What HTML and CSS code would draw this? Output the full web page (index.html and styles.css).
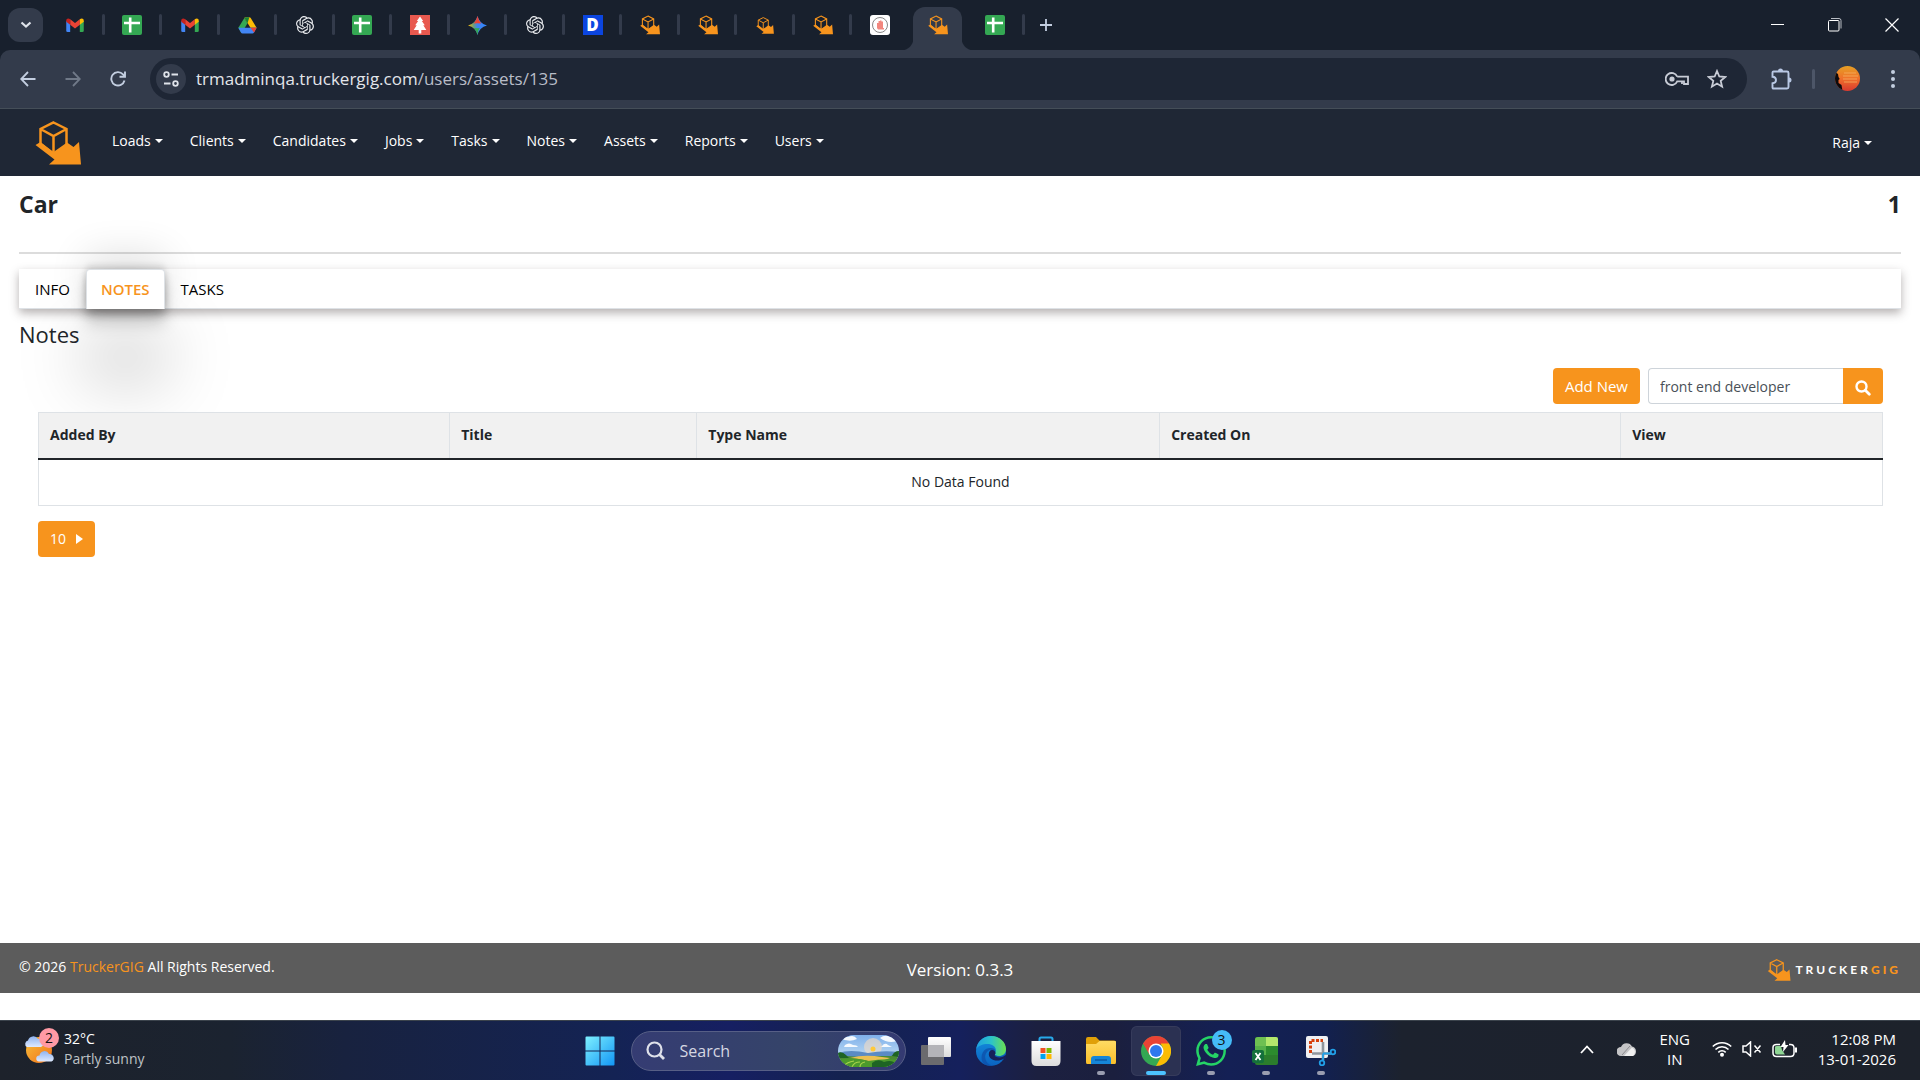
FILE: index.html
```html
<!DOCTYPE html>
<html lang="en">
<head>
<meta charset="utf-8">
<title>TruckerGIG - Car notes</title>
<link rel="stylesheet" href="styles.css">
</head>
<body>
<svg class="defs" width="0" height="0" aria-hidden="true">
  <defs>
    <linearGradient id="g-win" x1="0" y1="0" x2="1" y2="1"><stop offset="0" stop-color="#7ef0ff"/><stop offset="1" stop-color="#1296f5"/></linearGradient>
    <linearGradient id="g-gem" x1="0" y1="0" x2="1" y2="0"><stop offset="0" stop-color="#fbbc04"/><stop offset=".3" stop-color="#6a9d7c"/><stop offset=".5" stop-color="#3f83f0"/><stop offset="1" stop-color="#3186ff"/></linearGradient>
    <linearGradient id="g-edge" x1="0" y1="0" x2="1" y2="0"><stop offset="0" stop-color="#1f9fe0"/><stop offset=".5" stop-color="#2cc3c9"/><stop offset="1" stop-color="#6be04f"/></linearGradient>
    <linearGradient id="g-edge2" x1="0" y1="0" x2="0" y2="1"><stop offset="0" stop-color="#1490df"/><stop offset="1" stop-color="#0a62c0"/></linearGradient>
    <linearGradient id="g-folder" x1="0" y1="0" x2="0" y2="1"><stop offset="0" stop-color="#ffdb63"/><stop offset="1" stop-color="#fbbf2a"/></linearGradient>
    <linearGradient id="g-sun" x1="0" y1="0" x2="1" y2="1"><stop offset="0" stop-color="#f8c13a"/><stop offset="1" stop-color="#f0701a"/></linearGradient>
    <linearGradient id="g-cloud" x1="0" y1="0" x2="0" y2="1"><stop offset="0" stop-color="#8fb4f0"/><stop offset="1" stop-color="#dfeaff"/></linearGradient>
    <linearGradient id="g-sky" x1="0" y1="0" x2="0" y2="1"><stop offset="0" stop-color="#7fb0ea"/><stop offset="1" stop-color="#d5ecf8"/></linearGradient>
    <linearGradient id="g-avatar" x1="0" y1="0" x2="0" y2="1"><stop offset="0" stop-color="#e6a024"/><stop offset=".5" stop-color="#f0702a"/><stop offset="1" stop-color="#d83a30"/></linearGradient>
    <linearGradient id="g-paper" x1="0" y1="0" x2="0" y2="1"><stop offset="0" stop-color="#fff"/><stop offset="1" stop-color="#dcdcdc"/></linearGradient>
    <clipPath id="c-scene"><rect width="61" height="32" rx="16"/></clipPath>
    <clipPath id="c-avatar"><circle cx="12.500" cy="12.500" r="12.500"/></clipPath>
  </defs>
  <symbol id="i-truck" viewBox="0 0 46 44">
    <path d="M18.500 1.500 31.500 8v18L18.500 33 5.500 23V8ZM5.500 8l13 7 13-7M18.500 15v17" fill="none" stroke="#f7941d" stroke-width="2.500"/>
    <path d="M.5 24 5.500 21l13 10L32 21.500l6.500 4.500L44 21l2 22.500H14l5.500-5Z" fill="#f7941d"/>
  </symbol>
  <symbol id="i-gmail" viewBox="0 0 20 16">
    <path d="M0 3v11.500Q0 16 1.500 16H4.500V6Z" fill="#4285f4"/><path d="M20 3v11.500Q20 16 18.500 16H15.500V6Z" fill="#34a853"/>
    <path d="M4.500 1.500 10 5.800l5.500-4.300v6.200L10 12 4.500 7.700Z" fill="#ea4335"/>
    <path d="M15.500 7.700V1.500C17.500-.2 20 .5 20 3v1.400Z" fill="#fbbc04"/><path d="M4.500 7.700V1.500C2.500-.2 0 .5 0 3v1.400Z" fill="#c5221f"/>
  </symbol>
  <symbol id="i-sheet" viewBox="0 0 20 20"><rect width="20" height="20" rx="2" fill="#34a853"/><path d="M8.200 2.500v15M2 8h16" stroke="#fff" stroke-width="2.600"/></symbol>
  <symbol id="i-drive" viewBox="0 0 20 18">
    <path d="M6.700 1 10 6.500 3.700 17.200.3 11.500Z" fill="#34a853"/><path d="M6.700 1Q7 .3 8 .3h4Q13 .3 13.400 1l6.300 10.500h-6.500Z" fill="#fbbc04"/>
    <path d="M6.700 1Q7 .3 8 .3h4L10 6.500Z" fill="#188038"/><path d="M.3 11.500h19.400l-2.800 5q-.6 1-1.600 1H4.700q-1 0-1.600-1Z" fill="#4285f4"/><path d="M13.200 11.500h6.500l-2.800 5Z" fill="#ea4335"/>
  </symbol>
  <symbol id="i-gpt" viewBox="0 0 24 24"><path fill="#e8eaed" d="M22.2819 9.8211a5.9847 5.9847 0 0 0-.5157-4.9108 6.0462 6.0462 0 0 0-6.5098-2.9A6.0651 6.0651 0 0 0 4.9807 4.1818a5.9847 5.9847 0 0 0-3.9977 2.9 6.0462 6.0462 0 0 0 .7427 7.0966 5.98 5.98 0 0 0 .511 4.9107 6.051 6.051 0 0 0 6.5146 2.9001A5.9847 5.9847 0 0 0 13.2599 24a6.0557 6.0557 0 0 0 5.7718-4.2058 5.9894 5.9894 0 0 0 3.9977-2.9001 6.0557 6.0557 0 0 0-.7475-7.0729zm-9.022 12.6081a4.4755 4.4755 0 0 1-2.8764-1.0408l.1419-.0804 4.7783-2.7582a.7948.7948 0 0 0 .3927-.6813v-6.7369l2.02 1.1686a.071.071 0 0 1 .038.052v5.5826a4.504 4.504 0 0 1-4.4945 4.4944zm-9.6607-4.1254a4.4708 4.4708 0 0 1-.5346-3.0137l.142.0852 4.783 2.7582a.7712.7712 0 0 0 .7806 0l5.8428-3.3685v2.3324a.0804.0804 0 0 1-.0332.0615L9.74 19.9502a4.4992 4.4992 0 0 1-6.1408-1.6464zM2.3408 7.8956a4.485 4.485 0 0 1 2.3655-1.9728V11.6a.7664.7664 0 0 0 .3879.6765l5.8144 3.3543-2.0201 1.1685a.0757.0757 0 0 1-.071 0l-4.8303-2.7865A4.504 4.504 0 0 1 2.3408 7.872zm16.5963 3.8558L13.1038 8.364 15.1192 7.2a.0757.0757 0 0 1 .071 0l4.8303 2.7913a4.4944 4.4944 0 0 1-.6765 8.1042v-5.6772a.79.79 0 0 0-.407-.667zm2.0107-3.0231l-.142-.0852-4.7735-2.7818a.7759.7759 0 0 0-.7854 0L9.409 9.2297V6.8974a.0662.0662 0 0 1 .0284-.0615l4.8303-2.7866a4.4992 4.4992 0 0 1 6.6802 4.66zM8.3065 12.863l-2.02-1.1638a.0804.0804 0 0 1-.038-.0567V6.0742a4.4992 4.4992 0 0 1 7.3757-3.4537l-.142.0805L8.704 5.459a.7948.7948 0 0 0-.3927.6813zm1.0976-2.3654l2.602-1.4998 2.6069 1.4998v2.9994l-2.5974 1.4997-2.6067-1.4997Z"/></symbol>
  <symbol id="i-tree" viewBox="0 0 20 20"><path d="M0 0h20v20H0Z" fill="#e8594f"/><path d="m10 1.500 3.200 4.500h-1.400l3 4.200h-1.500l3 4.800h-5v3.500H8.700V15h-5l3-4.800H5.200l3-4.200H6.800Z" fill="#fff"/></symbol>
  <symbol id="i-gem" viewBox="0 0 20 20"><path d="M10 0Q12 8 20 10 12 12 10 20 8 12 0 10 8 8 10 0Z" fill="url(#g-gem)"/><path d="M10 0Q11 5 14 7.800L10 7.500 6 7.800Q9 5 10 0Z" fill="#ea4335"/><path d="M10 20q-1-5-4-7.500l4 .5 2.500-.5Q10.800 14 10 20Z" fill="#34a853"/></symbol>
  <symbol id="i-hand" viewBox="0 0 20 20"><rect width="20" height="20" rx="3" fill="#fff"/><circle cx="10" cy="10" r="7.500" fill="none" stroke="#888"/><path d="M7 8h1.500V6h1.500v-.5h1.500V6.500H13V13h1v1.500H8L7 13Z" fill="#f2877e"/></symbol>
</svg>

<header class="browser">
  <div class="tabstrip">
    <button class="tab-search" aria-label="Search tabs"><svg width="12" height="8" viewBox="0 0 12 8"><path d="m1.500 1.500 4.500 4 4.500-4" fill="none" stroke="#dfe3ea" stroke-width="2.200"/></svg></button>
    <div class="tabs" role="tablist" aria-label="Open tabs">
      <button class="tab" role="tab" aria-label="Gmail"><svg width="18" height="14"><use href="#i-gmail"/></svg></button>
      <button class="tab" role="tab" aria-label="Sheets"><svg width="20" height="20"><use href="#i-sheet"/></svg></button>
      <button class="tab" role="tab" aria-label="Gmail"><svg width="18" height="14"><use href="#i-gmail"/></svg></button>
      <button class="tab" role="tab" aria-label="Drive"><svg width="19" height="17"><use href="#i-drive"/></svg></button>
      <button class="tab" role="tab" aria-label="ChatGPT"><svg width="18" height="18"><use href="#i-gpt"/></svg></button>
      <button class="tab" role="tab" aria-label="Sheets"><svg width="20" height="20"><use href="#i-sheet"/></svg></button>
      <button class="tab" role="tab" aria-label="Tree"><svg width="20" height="20"><use href="#i-tree"/></svg></button>
      <button class="tab" role="tab" aria-label="Gemini"><svg width="19" height="19"><use href="#i-gem"/></svg></button>
      <button class="tab" role="tab" aria-label="ChatGPT"><svg width="18" height="18"><use href="#i-gpt"/></svg></button>
      <button class="tab" role="tab"><span class="fav-d">D</span></button>
      <button class="tab" role="tab" aria-label="TruckerGIG"><svg width="20" height="20"><use href="#i-truck"/></svg></button>
      <button class="tab" role="tab" aria-label="TruckerGIG"><svg width="20" height="20"><use href="#i-truck"/></svg></button>
      <button class="tab" role="tab" aria-label="TruckerGIG"><svg width="18" height="17"><use href="#i-truck"/></svg></button>
      <button class="tab" role="tab" aria-label="TruckerGIG"><svg width="20" height="20"><use href="#i-truck"/></svg></button>
      <button class="tab plain" role="tab" aria-label="Site"><svg width="20" height="20"><use href="#i-hand"/></svg></button>
      <button class="tab plain current" role="tab" aria-selected="true" aria-label="TruckerGIG"><svg width="20" height="20"><use href="#i-truck"/></svg></button>
      <button class="tab" role="tab" aria-label="Sheets"><svg width="20" height="20"><use href="#i-sheet"/></svg></button>
    </div>
    <button class="new-tab" aria-label="New tab"><svg width="14" height="14" viewBox="0 0 14 14"><path d="M7 1v12M1 7h12" stroke="#c3cee0" stroke-width="1.800"/></svg></button>
    <div class="window-buttons">
      <button aria-label="Minimize"><svg width="14" height="14" viewBox="0 0 14 14"><path d="M0 6.500h13" stroke="#fff"/></svg></button>
      <button aria-label="Restore"><svg width="14" height="14" viewBox="0 0 14 14"><path d="M3 .5h8q2 0 2 2v8" fill="none" stroke="#b9bdc4"/><rect x=".5" y="2.500" width="10.500" height="10.500" rx="1" fill="none" stroke="#fff"/></svg></button>
      <button aria-label="Close"><svg width="14" height="14" viewBox="0 0 14 14"><path d="m.5.5 13 13M13.500.5l-13 13" stroke="#fff" stroke-width="1.200"/></svg></button>
    </div>
  </div>
  <div class="toolbar">
    <div class="history">
      <button aria-label="Back"><svg width="16" height="16" viewBox="0 0 16 16"><path d="M15.500 8H1.500M8 1 1.200 8 8 15" fill="none" stroke="#c3cee0" stroke-width="1.800"/></svg></button>
      <button aria-label="Forward"><svg width="16" height="16" viewBox="0 0 16 16"><path d="M.5 8h14M8 1l6.800 7L8 15" fill="none" stroke="#707988" stroke-width="1.800"/></svg></button>
      <button aria-label="Reload"><svg width="16" height="16" viewBox="0 0 16 16"><path d="M14.500 9.500A6.700 6.700 0 1 1 13 3.300l1 1.200M15 .5v5.200H9.500" fill="none" stroke="#c3cee0" stroke-width="1.900"/></svg></button>
    </div>
    <div class="omnibox">
      <button class="site-info" aria-label="Site information"><svg width="16" height="16" viewBox="0 0 16 16"><g fill="none" stroke="#dfe3ea" stroke-width="1.800"><circle cx="3.500" cy="3.500" r="2.300"/><path d="M8.500 3.500H15M1 12.500h6.500"/><circle cx="12.500" cy="12.500" r="2.300"/></g></svg></button>
      <p class="url">trmadminqa.truckergig.com<span>/users/assets/135</span></p>
      <button class="key" aria-label="Passwords"><svg width="24" height="14" viewBox="0 0 24 14"><path d="M12.200 4.700H23V12h-4V9.300h-2V12M12 9.300h5M12.200 4.700A6 6 0 1 0 12.200 9.300h2.300" fill="none" stroke="#c8ccd6" stroke-width="1.800"/><circle cx="7" cy="7" r="2.600" fill="#c8ccd6"/></svg></button>
      <button class="star" aria-label="Bookmark"><svg width="20" height="20" viewBox="0 0 20 20"><path d="m10 2 2.300 5.500 5.900.5-4.500 3.900 1.400 5.800L10 14.600l-5.100 3.100 1.400-5.800L1.800 8l5.900-.5Z" fill="none" stroke="#c8ccd6" stroke-width="1.800"/></svg></button>
    </div>
    <div class="extras">
      <button class="puzzle" aria-label="Extensions"><svg width="22" height="22" viewBox="0 0 22 22"><path d="M1.500 4.500q0-1 1-1H16q1.500 0 1.500 1.500V19q0 1.500-1.500 1.500H2.500q-1 0-1-1v-4.200Q5 15 5 12T1.500 8.800Z" fill="none" stroke="#b9c8e4" stroke-width="1.900"/><path d="M7 3a2.500 2.500 0 0 1 5 0ZM18 9.500a2.500 2.500 0 0 1 0 5Z" fill="#b9c8e4"/></svg></button>
      <span class="divider"></span>
      <button class="avatar" aria-label="Profile"><svg width="25" height="25" viewBox="0 0 25 25"><g clip-path="url(#c-avatar)"><path d="M0 0h25v25H0Z" fill="url(#g-avatar)"/><path d="M0 6l3 2 .5 3 1.200 2-1.200 1v3l3 2 1 6H0Z" fill="#0c0a0c"/><path d="M9 7h12M8 10h15M8 13h14M9 16h13" stroke="#f6b060" stroke-width=".8"/></g></svg></button>
      <button class="menu" aria-label="Menu"><svg width="4" height="18" viewBox="0 0 4 18"><g fill="#c3cee0"><circle cx="2" cy="2" r="2"/><circle cx="2" cy="9" r="2"/><circle cx="2" cy="16" r="2"/></g></svg></button>
    </div>
  </div>
</header>

<nav class="navbar" aria-label="Main">
  <a class="brand" href="#" aria-label="TruckerGIG home"><svg width="46" height="44"><use href="#i-truck"/></svg></a>
  <ul class="menu-list">
    <li><a class="caret" href="#">Loads</a></li>
    <li><a class="caret" href="#">Clients</a></li>
    <li><a class="caret" href="#">Candidates</a></li>
    <li><a class="caret" href="#">Jobs</a></li>
    <li><a class="caret" href="#">Tasks</a></li>
    <li><a class="caret" href="#">Notes</a></li>
    <li><a class="caret" href="#">Assets</a></li>
    <li><a class="caret" href="#">Reports</a></li>
    <li><a class="caret" href="#">Users</a></li>
  </ul>
  <a class="caret user" href="#">Raja</a>
</nav>

<main class="page">
  <div class="title-row"><h1>Car</h1><strong>1</strong></div>
  <ul class="asset-tabs">
    <li><a href="#">INFO</a></li>
    <li><a class="active" href="#">NOTES</a></li>
    <li><a href="#">TASKS</a></li>
  </ul>
  <h2>Notes</h2>
  <section class="notes">
    <form class="actions" onsubmit="return false">
      <button class="btn add" type="button">Add New</button>
      <div class="search-group">
        <input type="text" value="front end developer" aria-label="Search notes">
        <button class="btn" aria-label="Search"><svg width="16" height="16" viewBox="0 0 16 16"><circle cx="6.500" cy="6.500" r="5" fill="none" stroke="#fff" stroke-width="2.400"/><path d="m10.300 10.300 4 4" stroke="#fff" stroke-width="2.800" stroke-linecap="round"/></svg></button>
      </div>
    </form>
    <table class="grid">
      <colgroup><col class="c-by"><col class="c-title"><col class="c-type"><col class="c-date"><col></colgroup>
      <thead><tr><th>Added By</th><th>Title</th><th>Type Name</th><th>Created On</th><th>View</th></tr></thead>
      <tbody><tr><td colspan="5">No Data Found</td></tr></tbody>
    </table>
    <button class="btn page-size">10 <svg width="7" height="10" viewBox="0 0 7 10"><path d="m0 0 7 5-7 5Z" fill="#fff"/></svg></button>
  </section>
</main>

<footer class="site-footer">
  <p class="copyright">© 2026 <a href="#">TruckerGIG</a> All Rights Reserved.</p>
  <p class="version">Version: 0.3.3</p>
  <div class="footer-logo"><svg width="24" height="22"><use href="#i-truck"/></svg><span>TRUCKER<b>GIG</b></span></div>
</footer>

<div class="taskbar">
  <div class="weather">
    <div class="weather-icon">
      <svg width="32" height="30" viewBox="0 0 32 30"><circle cx="15" cy="16" r="13" fill="url(#g-sun)"/><path d="M3 13a3.500 3.500 0 0 1 1-6.500A5.500 5.500 0 0 1 14 5a4 4 0 0 1 3 8Z" fill="url(#g-cloud)"/><path d="M15 27.500a3 3 0 0 1 .5-6A5 5 0 0 1 25 20a4 4 0 0 1 2.500 7.500Z" fill="url(#g-cloud)"/></svg>
      <span class="badge pink">2</span>
    </div>
    <p>32°C<span>Partly sunny</span></p>
  </div>
  <div class="apps">
    <button class="app" aria-label="Start"><svg width="30" height="30" viewBox="0 0 30 30"><path d="M.5 1.500q0-1 1-1h13v14H.5ZM15.500.5h13q1 0 1 1v13h-14ZM.5 15.500h14v14h-13q-1 0-1-1ZM15.500 15.500h14v13q0 1-1 1h-13Z" fill="url(#g-win)"/></svg></button>
    <label class="search-pill">
      <svg width="20" height="20" viewBox="0 0 20 20"><circle cx="8.500" cy="8.500" r="7" fill="none" stroke="#dfe1ea" stroke-width="2.200"/><path d="m13.500 13.500 4.500 4.500" stroke="#dfe1ea" stroke-width="2.800"/></svg>
      <input type="text" placeholder="Search" aria-label="Search Windows">
      <svg width="61" height="32" viewBox="0 0 61 32"><g clip-path="url(#c-scene)"><path d="M0 0h61v32H0Z" fill="url(#g-sky)"/><path d="M2 3q4-4 8-1 6-3 9 2-8 4-17-1ZM42 3q5-4 10-1 7 0 7 4-9 3-17-3ZM7 10q4-3 8 0 4 0 5 2H6ZM44 11q3-4 6-1l4 2H42Z" fill="#fff" opacity=".9"/><circle cx="35" cy="12" r="9" fill="#f4dcc4" opacity=".6"/><circle cx="35" cy="14" r="2.500" fill="#ffc93a"/><path d="M0 18q12-4 30 0 15-3 31-1v8H0Z" fill="#5a8bc4"/><path d="M0 18q5-1 8 3l16 1 17-1 12 0 8-3v14H0Z" fill="#4a8a34"/><path d="M12 23q14-4 32-1l8 1-14 5q-12-4-26-5Z" fill="#eac052"/><path d="M0 25q14-4 30 1 16-3 31-1v8H0Z" fill="#4c9a2c"/><path d="M6 31q3-4 10-5M14 32q2-5 8-5M22 32q0-4 5-5" stroke="#a8d24a" fill="none" stroke-width="1.200"/><path d="M0 18q4-2 8 2l3 3H0ZM61 16q-5 0-7 5l7 1ZM34 28q6-5 12-1 8-3 12 2l-6 4H34Z" fill="#1e6424"/></g></svg>
    </label>
    <button class="app" aria-label="Task view"><svg width="30" height="28" viewBox="0 0 30 28"><rect y="8" width="23" height="20" rx="1" fill="#6b6b6e"/><rect x="7" width="23" height="20" rx="1" fill="url(#g-paper)"/><path d="M7 8h16v12H7Z" fill="#b4b4b8"/></svg></button>
    <button class="app" aria-label="Edge"><svg width="30" height="30" viewBox="0 0 30 30"><circle cx="15" cy="15" r="15" fill="url(#g-edge2)"/><path d="M.2 13C1.500 5 8 0 15 0c8.500 0 15 6 15 13 0 4.500-3.200 7-7 7-3 0-4.500-1.200-4.500-2.500 0-1 1.300-1.500 1.300-3.800C19.800 10.500 16 8 11.500 8 6.500 8 2 10 .2 13Z" fill="url(#g-edge)"/><path d="M19.500 17.500c-1 1-1 2.500 3.500 2.700 3 .1 5-1.200 6.500-2.200-.4 2-1.300 4-2 5-3 1.500-7 2-11 .2C13 21 12 17 14.800 13.500c-5 1.500-7.300 7.500-4.300 12 1.500 2.500 4 4 7 4.300A15 15 0 0 1 8 28.300C4 24 5 16 10 13c4-2 9.500-1 9.500 2Z" fill="#0d4fa8" opacity=".75"/><path d="M28.500 19.800c-2.500 1.800-6 2.200-9 .6-1-.5-1-1.800 0-2.900 0-3-3.500-4.500-5.500-2.500-2.500 3-1 7.500 3.500 9 4 1.200 7.500.3 10-1.200l3.500 1.500V19Z" fill="#17205a"/></svg></button>
    <button class="app" aria-label="Store"><svg width="30" height="30" viewBox="0 0 30 30"><path d="M8.500 6V3q0-1.500 1.500-1.500h10q1.500 0 1.500 1.500v3" fill="none" stroke="#27a9ea" stroke-width="2"/><path d="M.5 5h29v20q0 5-5 5h-19q-5 0-5-5Z" fill="url(#g-paper)"/><path d="M9.500 12h5v5h-5Z" fill="#f25022"/><path d="M15.500 12h5v5h-5Z" fill="#7fba00"/><path d="M9.500 18h5v5h-5Z" fill="#00a4ef"/><path d="M15.500 18h5v5h-5Z" fill="#ffb900"/></svg></button>
    <button class="app running" aria-label="File Explorer"><svg width="30" height="27" viewBox="0 0 30 27"><path d="M0 2q0-2 2-2h8l3.500 3.500H28q2 0 2 2V12H0Z" fill="#e0a008"/><path d="M0 7h10l3.500-3H29q1 0 1 1v20q0 2-1 2H1q-1 0-1-2Z" fill="url(#g-folder)"/><path d="M5 27v-5q0-3 3-3h14q3 0 3 3v5Z" fill="#1686d8"/><path d="M9 23h12" stroke="#0c5aa4" stroke-width="1.500"/></svg></button>
    <button class="app running focused" aria-label="Chrome"><svg width="30" height="30" viewBox="0 0 30 30"><circle cx="15" cy="15" r="15" fill="#34a853"/><path d="M2 7.500A15 15 0 0 1 28 7.500L27.500 8.500H15L8.500 18.700Z" fill="#ea4335"/><path d="M28 7.500A15 15 0 0 1 15 30l6.300-11.500Q23 12 20 8.200V7.500Z" fill="#fbbc04"/><circle cx="15" cy="15" r="7.500" fill="#fff"/><circle cx="15" cy="15" r="6" fill="#2f78ee"/></svg></button>
    <button class="app running" aria-label="WhatsApp"><svg width="30" height="30" viewBox="0 0 24 24"><path fill="#25d366" d="M17.472 14.382c-.297-.149-1.758-.867-2.030-.967-.273-.099-.471-.148-.67.15-.197.297-.767.966-.94 1.164-.173.199-.347.223-.644.075-.297-.15-1.255-.463-2.390-1.475-.883-.788-1.480-1.761-1.653-2.059-.173-.297-.018-.458.13-.606.134-.133.298-.347.446-.52.149-.174.198-.298.298-.497.099-.198.05-.371-.025-.52-.075-.149-.669-1.612-.916-2.207-.242-.579-.487-.5-.669-.51-.173-.008-.371-.01-.57-.01-.198 0-.52.074-.792.372-.272.297-1.040 1.016-1.040 2.479 0 1.462 1.065 2.875 1.213 3.074.149.198 2.096 3.200 5.077 4.487.709.306 1.262.489 1.694.625.712.227 1.360.195 1.871.118.571-.085 1.758-.719 2.006-1.413.248-.694.248-1.289.173-1.413-.074-.124-.272-.198-.57-.347m-5.421 7.403h-.004a9.870 9.870 0 01-5.031-1.378l-.361-.214-3.741.982.998-3.648-.235-.374a9.860 9.860 0 01-1.510-5.260c.001-5.450 4.436-9.884 9.888-9.884 2.640 0 5.122 1.030 6.988 2.898a9.825 9.825 0 012.893 6.994c-.003 5.450-4.437 9.884-9.885 9.884m8.413-18.297A11.815 11.815 0 0012.050 0C5.495 0 .16 5.335.157 11.892c0 2.096.547 4.142 1.588 5.945L.057 24l6.305-1.654a11.882 11.882 0 005.683 1.448h.005c6.554 0 11.890-5.335 11.893-11.893a11.821 11.821 0 00-3.480-8.413z"/></svg><span class="badge blue">3</span></button>
    <button class="app running" aria-label="Excel"><svg width="30" height="30" viewBox="0 0 30 30"><rect x="4" y="1" width="23" height="28" rx="2" fill="#2b7d2c"/><path d="M7 1h8v9H4V4q0-3 3-3Z" fill="#6fc052"/><path d="M15 1h10q2 0 2 2v7H15Z" fill="#b4e86c"/><path d="M15 10h12v9H15Z" fill="#2c8c2e"/><path d="M4 10h11v9H4Z" fill="#56b04a"/><rect x="1" y="14" width="12" height="13" rx="2" fill="#14703c"/><path d="m4.500 17 5 7M9.500 17l-5 7" stroke="#fff" stroke-width="1.800"/></svg></button>
    <button class="app running" aria-label="Snipping Tool"><svg width="30" height="30" viewBox="0 0 30 30"><rect width="22" height="22" rx="2" fill="#f0f0f2"/><path d="M4.500 17V4.500H17" fill="none" stroke="#d8400c" stroke-width="3" stroke-dasharray="3 1.500"/><path d="M17 6v18M6 17.500h19" stroke="#8f959c" stroke-width="2.600"/><path d="M17 17.500v7M17 17.500h8" stroke="#21a0e8" stroke-width="1.800"/><circle cx="27" cy="16" r="2.300" fill="none" stroke="#21a0e8" stroke-width="1.800"/><circle cx="16" cy="27" r="2.300" fill="none" stroke="#21a0e8" stroke-width="1.800"/></svg></button>
  </div>
  <div class="tray">
    <button class="chevron" aria-label="Show hidden icons"><svg width="14" height="9" viewBox="0 0 14 9"><path d="m1 8 6-6.500L13 8" fill="none" stroke="#fff" stroke-width="1.800"/></svg></button>
    <svg width="20" height="14" viewBox="0 0 20 14"><path d="M4 14a4.500 4.500 0 0 1 0-9A6 6 0 0 1 15 4.500 5 5 0 0 1 16 14Z" fill="#c4c4c6"/><path d="M7 14 15 5.500A5 5 0 0 1 16 14Z" fill="#f0f0f0"/><path d="m5 13 8-9" stroke="#8c8c90"/></svg>
    <p class="lang">ENG<span>IN</span></p>
    <div class="status">
      <svg width="20" height="16" viewBox="0 0 20 16"><g fill="none" stroke="#fff" stroke-width="1.600"><path d="M.8 5.500a13 13 0 0 1 18.400 0M3.500 8.500a9 9 0 0 1 13 0M6.300 11.300a5.500 5.500 0 0 1 7.400 0"/></g><circle cx="10" cy="13.800" r="2" fill="#fff"/></svg>
      <svg width="20" height="16" viewBox="0 0 20 16"><path d="M1 5h3l4.500-4v14L4 11H1ZM12.500 4.500l6 7M18.500 4.500l-6 7" fill="none" stroke="#fff" stroke-width="1.500"/></svg>
      <svg width="26" height="18" viewBox="0 0 26 18"><path d="M8 4.500H4.500q-3.500 0-3.500 3V13q0 3.500 3.500 3.500h14Q22 16.500 22 13V8q0-3.500-3.500-3.500H17" fill="none" stroke="#fff" stroke-width="1.500"/><path d="M3 7q0-1 2-1h4l1 4 3 4.500H5q-2 0-2-2Z" fill="#8fd694"/><path d="m13 0-4.500 7h3L11 12l5.500-7h-3Z" fill="#fff"/><path d="M24 7.500v5" stroke="#fff" stroke-width="2"/></svg>
    </div>
    <p class="clock">12:08 PM<span>13-01-2026</span></p>
  </div>
</div>
</body>
</html>
```
FILE: styles.css
```css
* { box-sizing: border-box; }
html, body { margin: 0; }
body {
  display: flex;
  flex-direction: column;
  min-height: 100vh;
  background: #fff;
  color: #212529;
  font-family: "Open Sans", "Noto Sans", sans-serif;
  font-size: 14px;
  line-height: 24px;
}
button, input { font: inherit; color: inherit; }
button { display: flex; align-items: center; justify-content: center; padding: 0; border: 0; background: none; }
h1, h2, p, ul { margin: 0; padding: 0; }
ul { list-style: none; }
a { text-decoration: none; color: inherit; }
svg { display: block; flex: none; }
.defs { position: absolute; }

/* browser window */
.browser { background: #18202d; }
.tabstrip { display: flex; align-items: center; height: 50px; padding-left: 8px; }
.tab-search { width: 35px; height: 34px; border-radius: 12px; background: #333b4b; }
.tabs { display: grid; grid-template-columns: repeat(17, 1fr); width: 978px; height: 50px; margin-left: 3px; }
.tab { position: relative; height: 50px; }
.tab::after { content: ""; position: absolute; right: -1px; top: 14px; width: 3px; height: 21px; border-radius: 2px; background: #333b4b; }
.tab.plain::after { display: none; }
.tab.current::before {
  content: ""; position: absolute; left: -8px; right: -8px; top: 7px; bottom: 0;
  background:
    radial-gradient(circle at 0 0, transparent 12px, #333b4b 13px) left bottom / 12px 12px no-repeat,
    radial-gradient(circle at 100% 0, transparent 12px, #333b4b 13px) right bottom / 12px 12px no-repeat;
}
.tab.current::after { display: block; left: 4px; right: 4px; top: 7px; width: auto; height: auto; bottom: 0; border-radius: 12px 12px 0 0; }
.tab.current svg { position: relative; z-index: 1; }
.fav-d { width: 20px; height: 20px; background: #0b45e0; color: #fff; font: 800 17px/20px "Open Sans", sans-serif; text-align: center; }
.new-tab { width: 36px; height: 36px; margin-left: 4px; }
.window-buttons { display: flex; margin-left: auto; }
.window-buttons button { width: 57px; height: 50px; }
.toolbar { display: flex; align-items: center; height: 59px; padding: 0 0 1px; border-bottom: 1px solid #454e58; border-radius: 10px 10px 0 0; background: #333b4b; }
.history { display: flex; padding-left: 5px; }
.history button { width: 45px; height: 36px; }
.omnibox { display: flex; flex: 1; align-items: center; height: 42px; margin-left: 10px; padding: 0 20px 0 6px; border-radius: 21px; background: #1e2635; }
.site-info { width: 30px; height: 30px; border-radius: 50%; background: #333b4b; }
.url { flex: 1; margin-left: 10px; color: #e3e5ea; font-size: 17px; line-height: 26px; }
.url span { color: #b9bdc8; }
.star { margin-left: 18px; }
.extras { display: flex; align-items: center; margin-left: 24px; padding-right: 25px; }
.divider { width: 3px; height: 20px; margin: 0 20px 0 19px; border-radius: 2px; background: #4d5668; }
.menu { margin-left: 31px; }

/* application navigation */
.navbar { display: flex; align-items: center; height: 67px; padding: 0 48px 0 35px; background: #1f2735; color: #fff; }
.menu-list { display: flex; gap: 27px; margin-left: 31px; padding-bottom: 3px; }
.caret::after { content: ""; display: inline-block; margin-left: 4px; vertical-align: 3px; border: 4px solid transparent; border-top-color: currentColor; border-bottom: 0; }
.user { margin-left: auto; }

/* asset page */
.page { padding: 0 19px; }
.title-row { display: flex; justify-content: space-between; height: 78px; padding-top: 13px; border-bottom: 2px solid #dcdcdc; font-size: 23px; line-height: 30px; }
h1 { font-size: 23px; font-weight: 700; line-height: 30px; }
.asset-tabs { display: flex; height: 40px; margin-top: 15px; border-bottom: 1px solid #dee2e6; background: #fff; box-shadow: 0 4px 9px rgba(50, 40, 40, .36); color: #000; font-size: 15px; font-weight: 500; }
.asset-tabs a { display: block; height: 40px; padding: 8px 16px; border-radius: 4px 4px 0 0; }
.asset-tabs .active {
  padding: 7px 14px; border: 1px solid #dee2e6; border-bottom: 0; background: #fff; color: #f7941d; font-weight: 600;
  box-shadow: 0 68px 69px rgba(0, 0, 0, .25), 0 -15px 38px rgba(0, 0, 0, .12), 0 5px 8px rgba(0, 0, 0, .22), 0 15px 16px rgba(0, 0, 0, .17), 0 -4px 6px rgba(0, 0, 0, .09);
}
h2 { position: relative; margin-top: 11px; font-size: 22px; font-weight: 400; line-height: 28px; }
.notes { position: relative; margin-top: 20px; padding: 0 18px 0 19px; }
.actions { display: flex; justify-content: flex-end; gap: 8px; }
.btn { height: 36px; padding: 0 12px; border-radius: 4px; background: #f7941d; color: #fff; }
.add { font-size: 15px; }
.search-group { display: flex; }
.search-group input { width: 195px; height: 36px; padding: 0 11px; border: 1px solid #ced4da; border-right: 0; border-radius: 4px 0 0 4px; background: #fff; color: #495057; }
.search-group .btn { width: 40px; border-radius: 0 4px 4px 0; padding: 4px 0 0; }
.grid { width: 100%; margin-top: 8px; border-collapse: collapse; table-layout: fixed; background: #fff; }
.grid th, .grid td { height: 46px; padding: 0 11px; border: 1px solid #dee2e6; }
.grid th { background: #f1f1f1; border-bottom: 2px solid #212529; text-align: left; font-weight: 700; }
.grid td { height: 47px; text-align: center; }
.c-by { width: 22.3%; } .c-title { width: 13.4%; } .c-type { width: 25.1%; } .c-date { width: 25%; }
.page-size { gap: 10px; margin-top: 15px; padding: 0 12px; }

.site-footer { display: grid; grid-template-columns: 1fr auto 1fr; align-items: center; height: 50px; margin-top: auto; margin-bottom: 27px; padding: 0 19px; background: #5c5c5c; color: #fff; }
.site-footer a { color: #f7941d; }
.copyright { padding-bottom: 2px; }
.version { padding-top: 4px; font-size: 17px; }
.footer-logo { display: flex; align-items: center; justify-content: flex-end; gap: 4px; padding-top: 3px; font: 700 12px/20px Lato, sans-serif; letter-spacing: 3px; }
.footer-logo b { color: #f7941d; font-weight: 900; }

/* taskbar */
.taskbar {
  display: grid; grid-template-columns: 1fr auto 1fr; align-items: center; height: 60px; padding: 0 24px; border-top: 1px solid #3b434c; color: #fff; line-height: 20px;
  background: linear-gradient(90deg, #1d222b 0, #1b2330 12%, #18223f 18%, #142354 32%, #161f62 38%, #14224f 44%, #15205c 50%, #1c2040 54%, #1b1f3e 58%, #142055 64%, #12204f 69%, #1c222e 73%, #1d222b 100%);
}
.weather { display: flex; align-items: center; gap: 8px; padding-bottom: 3px; }
.weather span, .tray p span { display: block; }
.weather p span { color: #bfc2c6; }
.weather-icon { position: relative; }
.badge { position: absolute; width: 20px; height: 20px; border-radius: 50%; color: #111; font-size: 14px; line-height: 20px; text-align: center; }
.pink { right: -3px; top: -6px; background: #ff9aa5; }
.blue { right: 4px; top: 4px; background: #45bbf8; }
.apps { display: flex; align-items: center; gap: 5px; }
.app { position: relative; width: 50px; height: 50px; border-radius: 6px; }
.running::after { content: ""; position: absolute; bottom: 1px; left: 21px; width: 8px; height: 4px; border-radius: 2px; background: #9a9db0; }
.focused { background: #2b3152; box-shadow: inset 0 0 0 1px #363b5b; }
.focused::after { left: 15px; width: 20px; background: #4cc2ff; }
.search-pill { display: flex; align-items: center; width: 275px; height: 40px; margin-left: 1px; padding: 0 6px 0 14px; border: 1px solid #575f86; border-radius: 20px; background: linear-gradient(90deg, #353c73, #354469 60%, #343a72); }
.search-pill input { flex: 1; min-width: 0; padding: 0 0 0 14px; border: 0; background: none; color: #d5d7e2; font-size: 16px; }
.search-pill input::placeholder { color: #d5d7e2; opacity: 1; }
.tray { display: flex; align-items: center; justify-content: flex-end; padding-bottom: 3px; font-size: 15px; }
.chevron { margin-right: 23px; }
.lang { margin: 0 22px; text-align: center; }
.status { display: flex; align-items: center; gap: 10px; }
.clock { width: 98px; text-align: right; }
```
